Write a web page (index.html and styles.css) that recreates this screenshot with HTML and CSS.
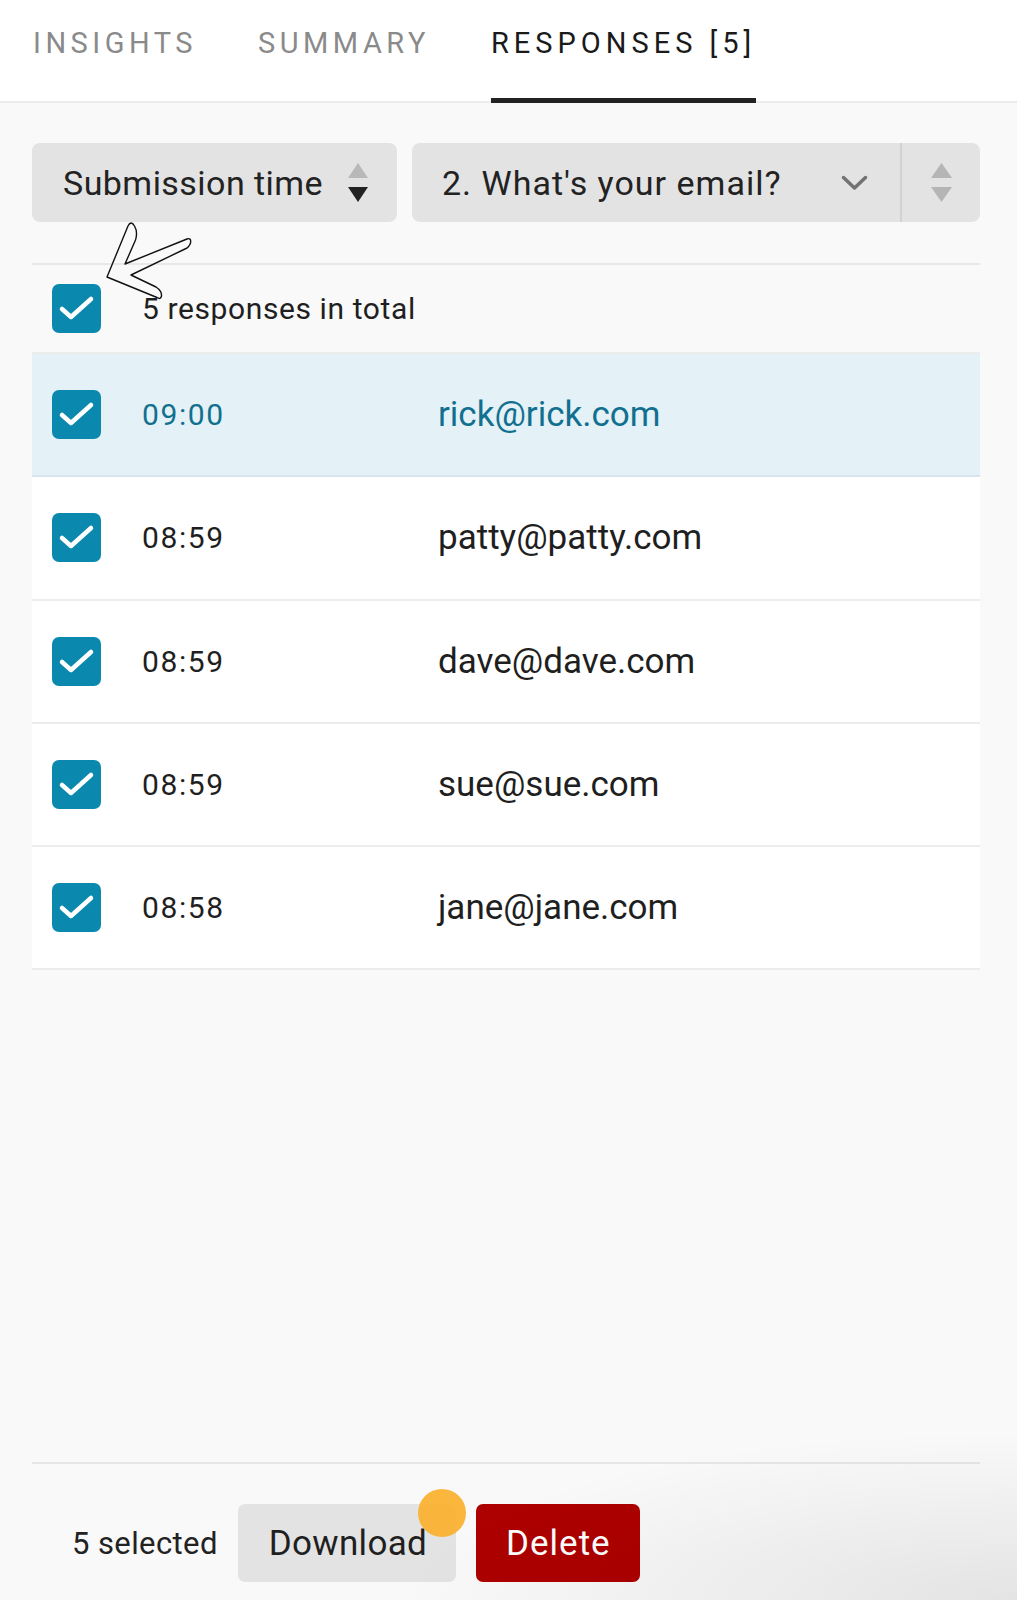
FILE: index.html
```html
<!DOCTYPE html>
<html lang="en">
<head>
    <meta charset="UTF-8">
    <meta name="viewport" content="width=device-width, initial-scale=1.0">
    <title>Responses</title>
    <link rel="stylesheet" href="styles.css">
</head>
<body>

    <!-- tabs -->
    <header class="tabs">
        <a class="tab">INSIGHTS</a>
        <a class="tab">SUMMARY</a>
        <a class="tab active">RESPONSES [5]</a>
    </header>

    <main class="content">

        <!-- sort / question pickers -->
        <div class="controls">
            <div class="select sort-select">
                <span>Submission time</span>
                <svg class="sort-arrows" width="20" height="39" viewBox="0 0 20 39">
                    <polygon points="0,15 10,0 20,15" fill="#b8b8b8"/>
                    <polygon points="0,24 20,24 10,39" fill="#222"/>
                </svg>
            </div>
            <div class="select question-select">
                <span class="select-label">2. What's your email?</span>
                <svg class="chevron" width="27" height="16" viewBox="0 0 27 16">
                    <polyline points="2.5,2.5 13.5,13 24.5,2.5" fill="none" stroke="#727272" stroke-width="3.5" stroke-linecap="round" stroke-linejoin="round"/>
                </svg>
                <span class="select-sort">
                    <svg width="21" height="39" viewBox="0 0 21 39">
                        <polygon points="0,15 10.5,0 21,15" fill="#b5b5b5"/>
                        <polygon points="0,24 21,24 10.5,39" fill="#b5b5b5"/>
                    </svg>
                </span>
            </div>
        </div>

        <!-- response list -->
        <div class="responses">
            <div class="row row-head">
                <span class="check"><svg width="49" height="49" viewBox="0 0 49 49"><polyline points="10,25 19,33 39,15"/></svg></span>
                <span class="total">5 responses in total</span>
                <svg class="scribble" width="95" height="85" viewBox="100 220 95 85">
                    <path d="M107 277 L128 226 Q131 220 134.5 226 Q138 232 135.5 240 L125 264 L187 239 Q191.5 237.5 190.5 243 Q189 247.5 185 249 L131 275 L156 287 Q162 291 161.5 296 Q160.5 300 157 297.5 Z"/>
                </svg>
            </div>
            <div class="row selected">
                <span class="check"><svg width="49" height="49" viewBox="0 0 49 49"><polyline points="10,25 19,33 39,15"/></svg></span>
                <span class="time">09:00</span>
                <span class="email">rick@rick.com</span>
            </div>
            <div class="row">
                <span class="check"><svg width="49" height="49" viewBox="0 0 49 49"><polyline points="10,25 19,33 39,15"/></svg></span>
                <span class="time">08:59</span>
                <span class="email">patty@patty.com</span>
            </div>
            <div class="row">
                <span class="check"><svg width="49" height="49" viewBox="0 0 49 49"><polyline points="10,25 19,33 39,15"/></svg></span>
                <span class="time">08:59</span>
                <span class="email">dave@dave.com</span>
            </div>
            <div class="row">
                <span class="check"><svg width="49" height="49" viewBox="0 0 49 49"><polyline points="10,25 19,33 39,15"/></svg></span>
                <span class="time">08:59</span>
                <span class="email">sue@sue.com</span>
            </div>
            <div class="row">
                <span class="check"><svg width="49" height="49" viewBox="0 0 49 49"><polyline points="10,25 19,33 39,15"/></svg></span>
                <span class="time">08:58</span>
                <span class="email">jane@jane.com</span>
            </div>
        </div>

    </main>

    <!-- bulk actions -->
    <footer class="actions">
        <span class="selected-count">5 selected</span>
        <button class="btn btn-download">Download<span class="dot"></span></button>
        <button class="btn btn-delete">Delete</button>
    </footer>

</body>
</html>
```

FILE: styles.css
```css
body {
    font-family: Roboto, 'Liberation Sans', sans-serif;
    background-color: #f9f9f9;
    color: #1f1f1f;
    margin: 0;
    min-height: 1600px;
    display: flex;
    flex-direction: column;
    position: relative;
    overflow: hidden;
}

/* soft shade in the lower right corner */
body::after {
    content: "";
    position: absolute;
    right: 0;
    bottom: 0;
    width: 100%;
    height: 180px;
    background: radial-gradient(ellipse 620px 170px at 100% 100%, rgba(0, 0, 0, 0.085), rgba(0, 0, 0, 0) 100%);
    pointer-events: none;
}

.tabs {
    display: flex;
    gap: 61px;
    height: 101px;
    padding-left: 33px;
    background-color: #fff;
    border-bottom: 2px solid #ececec;
}

.tab {
    box-sizing: border-box;
    height: 103px;
    padding-top: 29px;
    font-size: 29px;
    line-height: 29px;
    letter-spacing: 4.5px;
    color: #8a8a8a;
    border-bottom: 5px solid transparent;
}

.tab.active {
    color: #1a1a1a;
    letter-spacing: 5px;
    border-bottom-color: #222;
}

.content {
    padding: 0 37px 0 32px;
}

.controls {
    display: flex;
    gap: 15px;
    margin-top: 40px;
}

.select {
    display: flex;
    align-items: center;
    height: 79px;
    background-color: #e3e3e3;
    border-radius: 8px;
    font-size: 34px;
    color: #222;
}

.sort-select {
    width: 365px;
    box-sizing: border-box;
    justify-content: space-between;
    padding: 0 29px 0 31px;
    letter-spacing: 0.45px;
}

.question-select {
    flex: 1;
}

.select-label {
    flex: 1;
    padding-left: 30px;
    letter-spacing: 1px;
}

.chevron {
    margin-right: 32px;
}

.select-sort {
    display: flex;
    align-items: center;
    justify-content: center;
    width: 78px;
    align-self: stretch;
    border-left: 2px solid #d2d2d2;
}

.responses {
    margin-top: 41px;
    border-top: 2px solid #e8e8e8;
}

.row {
    display: flex;
    align-items: center;
    height: 121.3px;
    padding-left: 20px;
    background-color: #fff;
    border-bottom: 2px solid #ececec;
}

.row-head {
    position: relative;
    height: 87px;
    background-color: transparent;
}

.row.selected {
    background-color: #e4f1f7;
    border-bottom-color: #d6e5eb;
    color: #11708f;
}

.check {
    display: flex;
    width: 49px;
    height: 49px;
    margin-right: 41px;
    background-color: #0a88ae;
    border-radius: 7px;
}

.check polyline {
    fill: none;
    stroke: #fff;
    stroke-width: 4.5;
    stroke-linecap: round;
    stroke-linejoin: round;
}

.total {
    font-size: 30px;
    letter-spacing: 0.6px;
}

.scribble {
    position: absolute;
    left: 68px;
    top: -45px;
}

.scribble path {
    fill: none;
    stroke: #111;
    stroke-width: 1.4;
    stroke-linejoin: round;
}

.time {
    width: 296px;
    font-size: 30px;
    letter-spacing: 1.6px;
}

.email {
    font-size: 35px;
}

.actions {
    display: flex;
    align-items: center;
    gap: 20px;
    margin: auto 37px 0 32px;
    padding: 40px 0 18px 40px;
    border-top: 2px solid #e6e6e6;
}

.selected-count {
    font-size: 31px;
    letter-spacing: 0.4px;
    color: #222;
}

.btn {
    position: relative;
    height: 78px;
    border: none;
    border-radius: 7px;
    font-family: Roboto, 'Liberation Sans', sans-serif;
    font-size: 35px;
}

.btn-download {
    padding: 0 29px 0 31px;
    letter-spacing: 0.3px;
    background-color: #e3e3e3;
    color: #1f1f1f;
}

.btn-delete {
    padding: 0 29px 0 30px;
    letter-spacing: 1px;
    background-color: #ad0000;
    color: #fff;
}

.dot {
    position: absolute;
    top: -15px;
    right: -10px;
    width: 48px;
    height: 48px;
    border-radius: 50%;
    background-color: rgba(251, 177, 45, 0.92);
}
```
